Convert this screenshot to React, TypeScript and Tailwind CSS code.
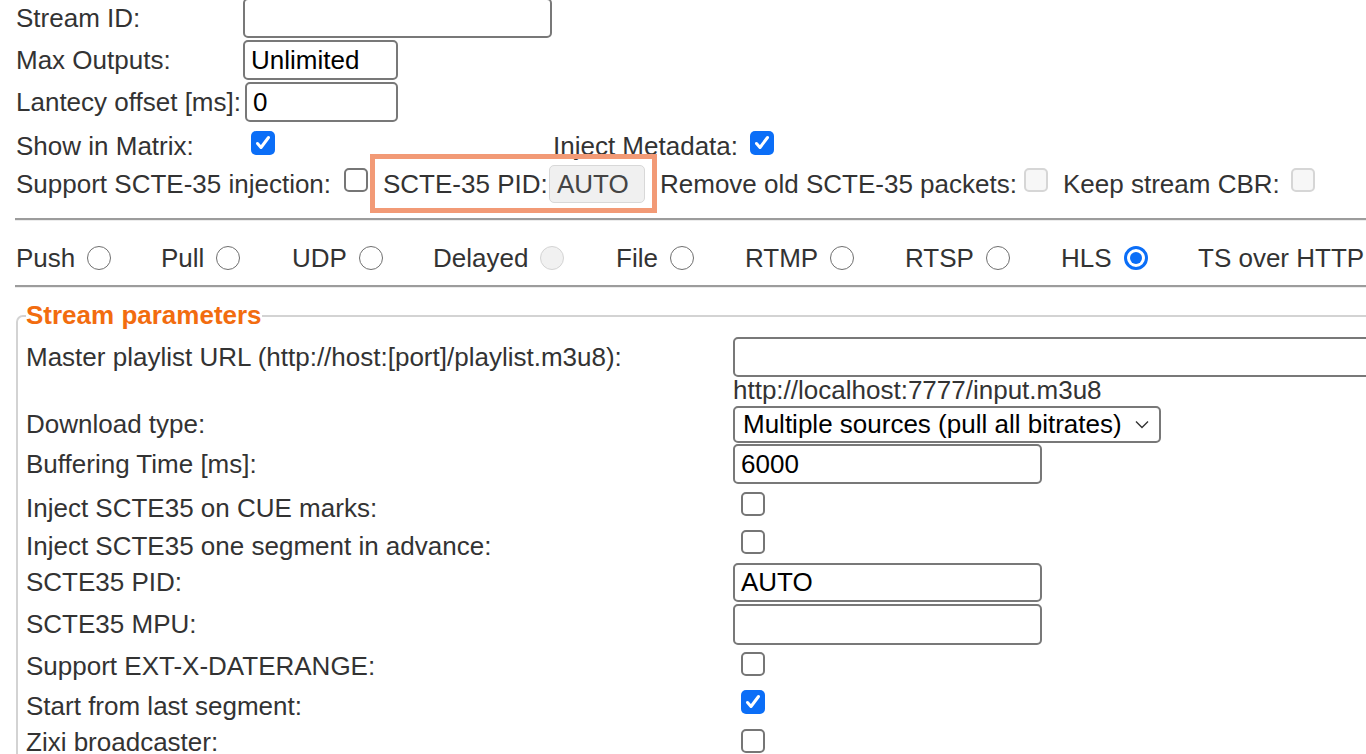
import React from "react"

type BoxProps = { checked?: boolean; disabled?: boolean; className?: string }

function CheckBox({ checked, disabled, className = "" }: BoxProps) {
  if (checked) {
    return (
      <span className={`shrink-0 w-[24px] h-[24px] rounded-[5px] bg-[#0b6ef7] flex items-center justify-center ${className}`}>
        <svg width="18" height="18" viewBox="0 0 18 18" fill="none">
          <path d="M3.5 9.5l3.5 4 7.5-10" stroke="white" strokeWidth="3" strokeLinecap="round" strokeLinejoin="round" />
        </svg>
      </span>
    )
  }
  return (
    <span
      className={`shrink-0 w-[24px] h-[24px] rounded-[5px] border-2 ${
        disabled ? "border-[#d6d6d6] bg-[#f7f7f7]" : "border-[#767676] bg-white"
      } ${className}`}
    />
  )
}

function Radio({ checked, disabled }: BoxProps) {
  if (checked) {
    return (
      <span className="shrink-0 w-[24px] h-[24px] rounded-full border-[3px] border-[#0b6ef7] bg-white flex items-center justify-center">
        <span className="w-[12px] h-[12px] rounded-full bg-[#0b6ef7]" />
      </span>
    )
  }
  return (
    <span
      className={`shrink-0 w-[24px] h-[24px] rounded-full border-[1.5px] ${
        disabled ? "border-[#d4d4d4] bg-[#f1f1f1]" : "border-[#6f6f6f] bg-white"
      }`}
    />
  )
}

function TextBox({ value = "", className = "" }: { value?: string; className?: string }) {
  return (
    <div className={`shrink-0 flex items-center border-2 border-[#787878] rounded-[5px] bg-white px-[6px] text-black whitespace-nowrap ${className}`}>
      {value}
    </div>
  )
}

const modes = [
  { name: "Push", w: "w-[145px]" },
  { name: "Pull", w: "w-[131px]" },
  { name: "UDP", w: "w-[141px]" },
  { name: "Delayed", w: "w-[183px]", disabled: true },
  { name: "File", w: "w-[129px]" },
  { name: "RTMP", w: "w-[160px]" },
  { name: "RTSP", w: "w-[156px]" },
  { name: "HLS", w: "w-[137px]", checked: true },
  { name: "TS over HTTP", w: "w-[200px]" },
]

export default function App() {
  return (
    <div className="w-[1366px] h-[754px] overflow-hidden bg-white text-[26px] leading-normal text-[#333] font-[family-name:'Liberation_Sans',Arial,sans-serif]">
      {/* General settings */}
      <div className="pl-[16px] -mt-[2px]">
        <div className="flex h-[40px] items-center">
          <span className="w-[227px] shrink-0 whitespace-nowrap">Stream ID:</span>
          <TextBox className="w-[309px] h-[40px]" />
        </div>
        <div className="flex h-[40px] items-center mt-[2px]">
          <span className="w-[227px] shrink-0 whitespace-nowrap">Max Outputs:</span>
          <TextBox value="Unlimited" className="w-[155px] h-[40px]" />
        </div>
        <div className="flex h-[40px] items-center mt-[2px]">
          <span className="w-[229px] shrink-0 whitespace-nowrap">Lantecy offset [ms]:</span>
          <TextBox value="0" className="w-[153px] h-[40px]" />
        </div>
        <div className="flex h-[44px] items-center mt-[2px]">
          <span className="w-[227px] shrink-0 whitespace-nowrap">Show in Matrix:</span>
          <div className="w-[310px] shrink-0 flex items-center">
            <CheckBox checked className="ml-[8px] mb-[6px]" />
          </div>
          <span className="w-[197px] shrink-0 whitespace-nowrap">Inject Metadata:</span>
          <CheckBox checked className="mb-[6px]" />
        </div>
        <div className="flex h-[32px] items-center">
          <span className="w-[328px] shrink-0 whitespace-nowrap">Support SCTE-35 injection:</span>
          <CheckBox className="mb-[8px]" />
          <span className="relative ml-[15px] flex items-center shrink-0">
            <span className="w-[166px] shrink-0 whitespace-nowrap">SCTE-35 PID:</span>
            <span className="w-[96px] h-[38px] shrink-0 flex items-center px-[7px] rounded-[5px] border border-[#d8d8d8] bg-[#f0f0f0] text-[#444]">
              AUTO
            </span>
            <span className="pointer-events-none absolute -left-[13px] -right-[12px] -top-[11px] -bottom-[9px] border-[5px] border-[#f29a76]" />
          </span>
          <span className="ml-[15px] w-[364px] shrink-0 whitespace-nowrap">Remove old SCTE-35 packets:</span>
          <CheckBox disabled className="mb-[8px]" />
          <span className="ml-[15px] w-[228px] shrink-0 whitespace-nowrap">Keep stream CBR:</span>
          <CheckBox disabled className="mb-[8px]" />
        </div>
      </div>

      <div className="ml-[15px] mt-[18px] h-[3px] border-t-2 border-t-[#9c9c9c] border-b border-b-[#ececec]" />

      {/* Input type */}
      <div className="flex h-[40px] items-center pl-[16px] mt-[17px] whitespace-nowrap">
        {modes.map((m) => (
          <div key={m.name} className={`${m.w} shrink-0 flex items-center`}>
            <span>{m.name}</span>
            {m.name !== "TS over HTTP" && (
              <span className="ml-[12px] flex">
                <Radio checked={m.checked} disabled={m.disabled} />
              </span>
            )}
          </div>
        ))}
      </div>

      <div className="ml-[15px] mt-[7px] h-[3px] border-t-2 border-t-[#9c9c9c] border-b border-b-[#ececec]" />

      {/* Stream parameters */}
      <fieldset className="ml-[16px] mt-[8px] w-[1420px] border-2 border-[#d3d3d3] rounded-tl-[7px] pl-[8px] pt-[1px] pb-[30px]">
        <legend className="font-bold text-[#f26c0f]">Stream parameters</legend>

        <div className="flex h-[42px] items-center">
          <span className="w-[707px] shrink-0 whitespace-nowrap">Master playlist URL (http://host:[port]/playlist.m3u8):</span>
          <TextBox className="w-[700px] h-[40px]" />
        </div>
        <div className="flex h-[24px] items-center">
          <span className="w-[707px] shrink-0" />
          <span className="whitespace-nowrap">http://localhost:7777/input.m3u8</span>
        </div>
        <div className="flex h-[44px] items-center">
          <span className="w-[707px] shrink-0 whitespace-nowrap">Download type:</span>
          <div className="w-[428px] h-[37px] shrink-0 flex items-center justify-between border-2 border-[#787878] rounded-[5px] pl-[8px] pr-[10px] text-black whitespace-nowrap">
            <span>Multiple sources (pull all bitrates)</span>
            <svg width="14" height="9" viewBox="0 0 14 9" fill="none">
              <path d="M1 1.5l6 6 6-6" stroke="#333" strokeWidth="1.4" />
            </svg>
          </div>
        </div>
        <div className="flex h-[36px] items-center">
          <span className="w-[707px] shrink-0 whitespace-nowrap">Buffering Time [ms]:</span>
          <TextBox value="6000" className="w-[309px] h-[40px]" />
        </div>
        <div className="flex h-[52px] items-center">
          <span className="w-[707px] shrink-0 whitespace-nowrap">Inject SCTE35 on CUE marks:</span>
          <CheckBox className="ml-[8px] mb-[9px]" />
        </div>
        <div className="flex h-[24px] items-center">
          <span className="w-[707px] shrink-0 whitespace-nowrap">Inject SCTE35 one segment in advance:</span>
          <CheckBox className="ml-[8px] mb-[8px]" />
        </div>
        <div className="flex h-[48px] items-center">
          <span className="w-[707px] shrink-0 whitespace-nowrap">SCTE35 PID:</span>
          <TextBox value="AUTO" className="w-[309px] h-[39px]" />
        </div>
        <div className="flex h-[36px] items-center">
          <span className="w-[707px] shrink-0 whitespace-nowrap">SCTE35 MPU:</span>
          <TextBox className="w-[309px] h-[41px]" />
        </div>
        <div className="flex h-[48px] items-center">
          <span className="w-[707px] shrink-0 whitespace-nowrap">Support EXT-X-DATERANGE:</span>
          <CheckBox className="ml-[8px] mb-[5px]" />
        </div>
        <div className="flex h-[32px] items-center">
          <span className="w-[707px] shrink-0 whitespace-nowrap">Start from last segment:</span>
          <CheckBox checked className="ml-[8px] mb-[8px]" />
        </div>
        <div className="flex h-[40px] items-center">
          <span className="w-[707px] shrink-0 whitespace-nowrap">Zixi broadcaster:</span>
          <CheckBox className="ml-[8px] mb-[3px]" />
        </div>
      </fieldset>
    </div>
  )
}
